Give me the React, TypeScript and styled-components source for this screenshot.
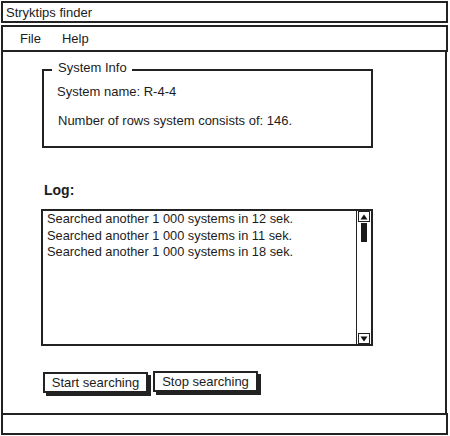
import React from "react";
import styled, { createGlobalStyle } from "styled-components";

const GlobalStyle = createGlobalStyle`
  html, body { margin: 0; padding: 0; background: #fff; }
  body {
    font-family: "Liberation Sans", Arial, sans-serif;
    color: #1c1c1c;
    font-size: 13px;
  }
  * { box-sizing: border-box; }
`;

const ink = "#222";

const Window = styled.div`
  width: 447px;
  height: 434px;
  margin: 1px 0 0 1px;
  display: flex;
  flex-direction: column;
`;

const TitleBar = styled.div`
  height: 22px;
  border: 2px solid ${ink};
  display: flex;
  align-items: center;
  padding-left: 3px;
  font-size: 13px;
`;

const MenuBar = styled.div`
  margin-top: 2px;
  height: 27px;
  border: 2px solid ${ink};
  display: flex;
  align-items: center;
  gap: 21px;
  padding-left: 17px;
  font-size: 13px;
`;

const MenuItem = styled.span`
  line-height: 16px;
`;

const Content = styled.div`
  flex: 1;
  margin-right: 1px;
  border-left: 2px solid ${ink};
  border-right: 2px solid ${ink};
  display: flex;
  flex-direction: column;
  align-items: flex-start;
`;

const GroupBox = styled.div`
  position: relative;
  margin: 17px 0 0 39px;
  width: 331px;
  height: 79px;
  border: 2px solid ${ink};
  padding: 13px 0 0 13px;
  display: flex;
  flex-direction: column;
  gap: 14px;
`;

const Legend = styled.span`
  position: absolute;
  top: -11px;
  left: 8px;
  padding: 0 5px 0 6px;
  background: #fff;
  line-height: 16px;
`;

const InfoLine = styled.div<{ $indent?: number }>`
  line-height: 15px;
  padding-left: ${(p) => p.$indent ?? 0}px;
`;

const LogLabel = styled.div`
  margin: 34px 0 0 41px;
  font-weight: bold;
  font-size: 14px;
  line-height: 16px;
`;

const LogBox = styled.div`
  margin: 11px 0 0 38px;
  width: 332px;
  height: 137px;
  border: 2px solid ${ink};
  display: flex;
`;

const LogLines = styled.div`
  flex: 1;
  padding: 0 0 0 4px;
  font-size: 12.8px;
  line-height: 16.5px;
`;

const Scrollbar = styled.div`
  width: 15px;
  border-left: 1.5px solid ${ink};
  display: flex;
  flex-direction: column;
  justify-content: space-between;
  align-items: center;
  padding: 0 1px;
`;

const ArrowBox = styled.div`
  width: 12px;
  height: 11px;
  border: 1px solid ${ink};
  display: flex;
  align-items: center;
  justify-content: center;
`;

const Track = styled.div`
  flex: 1;
  width: 100%;
  display: flex;
  justify-content: center;
  padding-top: 1px;
`;

const Thumb = styled.div`
  width: 6px;
  height: 19px;
  background: #1a1a1a;
`;

const ButtonRow = styled.div`
  margin: 26px 0 0 40px;
  display: flex;
  align-items: flex-start;
  gap: 5px;
`;

const Button = styled.button<{ $lift?: number }>`
  width: 105px;
  height: 21px;
  margin-top: ${(p) => -(p.$lift ?? 0)}px;
  border: 2px solid ${ink};
  background: #fff;
  box-shadow: 3px 3px 0 ${ink};
  font-family: inherit;
  font-size: 13px;
  color: #1c1c1c;
  padding: 0;
  line-height: 16px;
`;

const StatusBar = styled.div`
  height: 22px;
  border: 2px solid ${ink};
`;

const Arrow = ({ up }: { up?: boolean }) => (
  <svg width="8" height="6" viewBox="0 0 8 6">
    <polygon points={up ? "4,0.5 7.5,5.5 0.5,5.5" : "0.5,0.5 7.5,0.5 4,5.5"} fill="#111" />
  </svg>
);

const logs = [
  "Searched another 1 000 systems in 12 sek.",
  "Searched another 1 000 systems in 11 sek.",
  "Searched another 1 000 systems in 18 sek.",
];

export default function App() {
  return (
    <>
      <GlobalStyle />
      <Window>
        <TitleBar>Stryktips finder</TitleBar>
        <MenuBar>
          <MenuItem>File</MenuItem>
          <MenuItem>Help</MenuItem>
        </MenuBar>
        <Content>
          <GroupBox>
            <Legend>System Info</Legend>
            <InfoLine>System name: R-4-4</InfoLine>
            <InfoLine $indent={1}>Number of rows system consists of: 146.</InfoLine>
          </GroupBox>
          <LogLabel>Log:</LogLabel>
          <LogBox>
            <LogLines>
              {logs.map((l, i) => (
                <div key={i}>{l}</div>
              ))}
            </LogLines>
            <Scrollbar>
              <ArrowBox>
                <Arrow up />
              </ArrowBox>
              <Track>
                <Thumb />
              </Track>
              <ArrowBox>
                <Arrow />
              </ArrowBox>
            </Scrollbar>
          </LogBox>
          <ButtonRow>
            <Button>Start searching</Button>
            <Button $lift={1}>Stop searching</Button>
          </ButtonRow>
        </Content>
        <StatusBar />
      </Window>
    </>
  );
}
